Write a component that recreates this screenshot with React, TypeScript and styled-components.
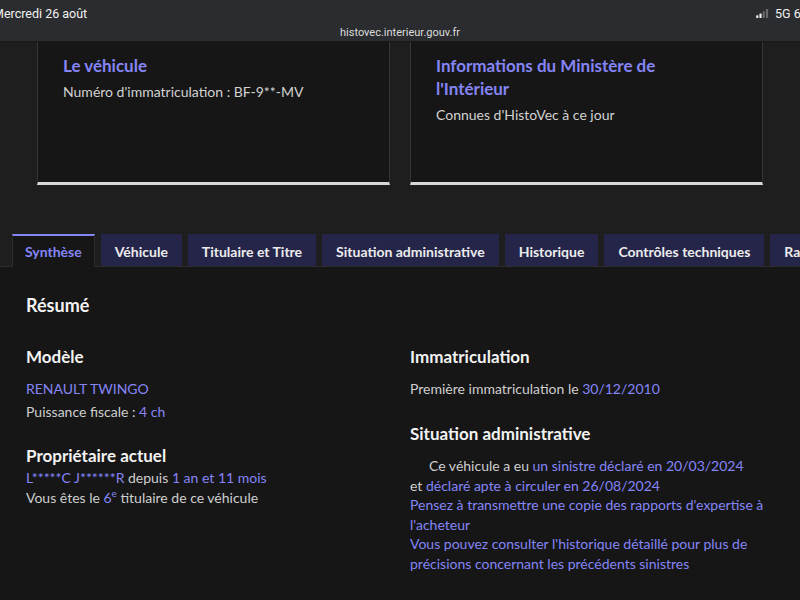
import styled, { createGlobalStyle } from 'styled-components'

const GlobalStyle = createGlobalStyle`
  html, body {
    margin: 0;
    padding: 0;
    background: #1e1e1e;
  }
  body {
    font-family: Lato, "Noto Sans", sans-serif;
    overflow: hidden;
  }
`

const tabs = [
  'Synthèse',
  'Véhicule',
  'Titulaire et Titre',
  'Situation administrative',
  'Historique',
  'Contrôles techniques',
  'Rapport',
]

export default function App() {
  return (
    <>
      <GlobalStyle />
      <Page>
        {/* barre d'état de la tablette */}
        <StatusBar>
          <StatusTop>
            <DateText>Mercredi 26 août</DateText>
            <StatusRight>
              <Signal viewBox="0 0 14 10">
                <rect x="0" y="7" width="2.4" height="3" rx="0.5" fill="#f2f2f2" />
                <rect x="3.6" y="5" width="2.4" height="5" rx="0.5" fill="#f2f2f2" />
                <rect x="7.2" y="2.5" width="2.4" height="7.5" rx="0.5" fill="#6a6a6d" />
                <rect x="10.8" y="0" width="2.4" height="10" rx="0.5" fill="#6a6a6d" />
              </Signal>
              <span>5G 63 %</span>
            </StatusRight>
          </StatusTop>
          <Url>histovec.interieur.gouv.fr</Url>
        </StatusBar>

        <CardsRow>
          <Card>
            <CardTitle>Le véhicule</CardTitle>
            <CardText>Numéro d'immatriculation : BF-9**-MV</CardText>
          </Card>
          <Card>
            <CardTitle>Informations du Ministère de l'Intérieur</CardTitle>
            <CardText>Connues d'HistoVec à ce jour</CardText>
          </Card>
        </CardsRow>

        <TabList>
          {tabs.map((t, i) => (
            <Tab key={t} $active={i === 0}>
              {t}
            </Tab>
          ))}
        </TabList>

        <Panel>
          <PanelTitle>Résumé</PanelTitle>
          <Columns>
            <Column>
              <SectionTitle>Modèle</SectionTitle>
              <Line $gap={3}>
                <Link>RENAULT TWINGO</Link>
              </Line>
              <Line>
                Puissance fiscale : <Link>4 ch</Link>
              </Line>
              <SectionTitle $top={22} $bottom={0}>
                Propriétaire actuel
              </SectionTitle>
              <Line $tight>
                <Link>L*****C J******R</Link> depuis <Link>1 an et 11 mois</Link>
              </Line>
              <Line $tight>
                Vous êtes le <Link>6<sup>e</sup></Link> titulaire de ce véhicule
              </Line>
            </Column>
            <Column>
              <SectionTitle>Immatriculation</SectionTitle>
              <Line>
                Première immatriculation le <Link>30/12/2010</Link>
              </Line>
              <SectionTitle $top={23} $bottom={10}>
                Situation administrative
              </SectionTitle>
              <Para>
                Ce véhicule a eu <Link>un sinistre déclaré en 20/03/2024</Link>
                <br />
                et <Link>déclaré apte à circuler en 26/08/2024</Link>
                <br />
                <Link>Pensez à transmettre une copie des rapports d'expertise à l'acheteur</Link>
                <br />
                <Link>
                  Vous pouvez consulter l'historique détaillé pour plus de précisions concernant les
                  précédents sinistres
                </Link>
              </Para>
            </Column>
          </Columns>
        </Panel>
      </Page>
    </>
  )
}

const Page = styled.div`
  width: 800px;
  height: 600px;
  display: flex;
  flex-direction: column;
  overflow: hidden;
  background: #1e1e1e;
`

// barre d'état
const StatusBar = styled.div`
  height: 42px;
  flex-shrink: 0;
  background: #2b2c2f;
  border-bottom: 1px solid #19191a;
  box-sizing: border-box;
  font-family: Roboto, "Liberation Sans", sans-serif;
  color: #f2f2f2;
  display: flex;
  flex-direction: column;
  overflow: hidden;
`

const StatusTop = styled.div`
  height: 24px;
  display: flex;
  align-items: center;
  justify-content: space-between;
  font-size: 12.5px;
  padding-top: 1px;
`

const DateText = styled.span`
  margin-left: -7px;
`

const StatusRight = styled.div`
  display: flex;
  align-items: center;
  gap: 6px;
  margin-right: -20px;
`

const Signal = styled.svg`
  width: 13px;
  height: 9px;
`

const Url = styled.div`
  text-align: center;
  font-size: 11px;
  color: #dcdcdc;
  line-height: 14px;
  padding-top: 1px;
`

// cartes du haut
const CardsRow = styled.div`
  display: grid;
  grid-template-columns: 353px 353px;
  gap: 20px;
  padding: 0 37px;
  flex-shrink: 0;
`

const Card = styled.div`
  height: 143px;
  box-sizing: border-box;
  background: #161616;
  border: 1px solid #353535;
  border-top: none;
  border-bottom: 3px solid #d8d8d8;
  padding: 12px 25px 0;
`

const CardTitle = styled.h3`
  margin: 0 0 4px;
  max-width: 270px;
  font-size: 17px;
  line-height: 23px;
  font-weight: 700;
  color: #8585f6;
`

const CardText = styled.p`
  margin: 0;
  font-size: 14px;
  line-height: 22px;
  color: #d2d2d2;
`

// onglets
const TabList = styled.div`
  margin-top: 49px;
  display: flex;
  gap: 6px;
  padding-left: 12px;
  white-space: nowrap;
  flex-shrink: 0;
  border-bottom: 1px solid #2c2c2c;
`

const Tab = styled.div<{ $active?: boolean }>`
  height: 32px;
  box-sizing: border-box;
  padding: 0 ${(p) => (p.$active ? 12 : 14)}px;
  display: flex;
  align-items: center;
  flex-shrink: 0;
  font-size: 14px;
  font-weight: 700;
  color: ${(p) => (p.$active ? '#8585f6' : '#ececec')};
  background: ${(p) => (p.$active ? '#161616' : '#25254a')};
  border-top: 2px solid ${(p) => (p.$active ? '#8585f6' : '#25254a')};
  ${(p) =>
    p.$active &&
    'border-left: 1px solid #2c2c2c; border-right: 1px solid #2c2c2c; margin-bottom: -1px; height: 33px;'}
`

// contenu de l'onglet
const Panel = styled.div`
  flex: 1;
  background: #161616;
  padding: 25px 26px 0;
`

const PanelTitle = styled.h2`
  margin: 0 0 27px;
  font-size: 18px;
  line-height: 26px;
  font-weight: 700;
  color: #f2f2f2;
`

const Columns = styled.div`
  display: grid;
  grid-template-columns: 384px 1fr;
`

const Column = styled.div`
  display: flex;
  flex-direction: column;
`

const SectionTitle = styled.h3<{ $top?: number; $bottom?: number }>`
  margin: ${(p) => p.$top ?? 0}px 0 ${(p) => p.$bottom ?? 10}px;
  font-size: 17px;
  line-height: 24px;
  font-weight: 700;
  color: #f2f2f2;
`

const Line = styled.p<{ $gap?: number; $tight?: boolean }>`
  margin: 0 0 ${(p) => p.$gap ?? 0}px;
  font-size: 14px;
  line-height: ${(p) => (p.$tight ? '19.5px' : '20px')};
  color: #cecece;

  sup {
    font-size: 10px;
    line-height: 0;
  }
`

const Para = styled.p`
  margin: 0;
  font-size: 14px;
  line-height: 19.5px;
  color: #cecece;
  text-indent: 19px;
`

const Link = styled.span`
  color: #8585f6;
`
